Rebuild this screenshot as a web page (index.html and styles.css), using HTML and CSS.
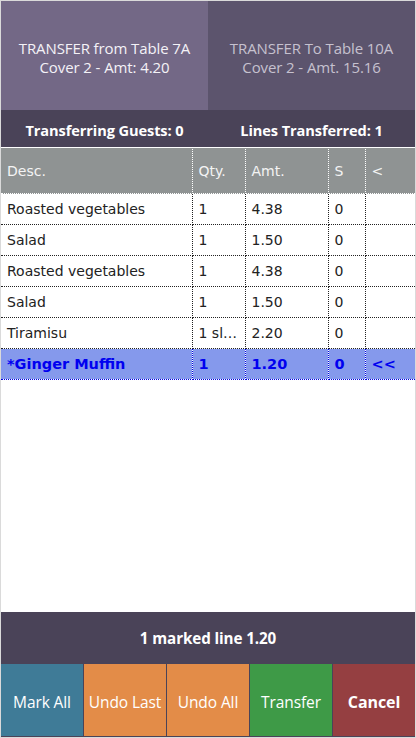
FILE: index.html
```html
<!DOCTYPE html>
<html>
<head>
<meta charset="utf-8">
<link rel="stylesheet" href="styles.css">
</head>
<body>
<div class="app">
  <div class="top">
    <div class="tile from">TRANSFER from Table 7A<br>Cover 2 - Amt: 4.20</div>
    <div class="tile to">TRANSFER To Table 10A<br>Cover 2 - Amt. 15.16</div>
  </div>
  <div class="status">
    <div>Transferring Guests: 0</div>
    <div>Lines Transferred: 1</div>
  </div>
  <div class="list">
    <table class="grid">
      <colgroup>
        <col class="c-desc"><col class="c-qty"><col class="c-amt"><col class="c-s"><col class="c-mark">
      </colgroup>
      <thead>
        <tr><th>Desc.</th><th>Qty.</th><th>Amt.</th><th>S</th><th>&lt;</th></tr>
      </thead>
      <tbody>
        <tr><td>Roasted vegetables</td><td>1</td><td>4.38</td><td>0</td><td></td></tr>
        <tr><td>Salad</td><td>1</td><td>1.50</td><td>0</td><td></td></tr>
        <tr><td>Roasted vegetables</td><td>1</td><td>4.38</td><td>0</td><td></td></tr>
        <tr><td>Salad</td><td>1</td><td>1.50</td><td>0</td><td></td></tr>
        <tr><td>Tiramisu</td><td>1 slice</td><td>2.20</td><td>0</td><td></td></tr>
        <tr class="marked"><td>*Ginger Muffin</td><td>1</td><td>1.20</td><td>0</td><td>&lt;&lt;</td></tr>
      </tbody>
    </table>
  </div>
  <div class="summary">1 marked line 1.20</div>
  <div class="actions">
    <button class="btn blue">Mark All</button>
    <button class="btn orange">Undo Last</button>
    <button class="btn orange">Undo All</button>
    <button class="btn green">Transfer</button>
    <button class="btn red bold">Cancel</button>
  </div>
</div>
</body>
</html>
```

FILE: styles.css
```css
html, body {
  margin: 0;
  padding: 0;
  background: #fff;
}
.app {
  width: 416px;
  height: 738px;
  box-sizing: border-box;
  border: 1px solid #dadada;
  display: flex;
  flex-direction: column;
  font-family: "Open Sans", "Noto Sans", sans-serif;
}
.top {
  display: grid;
  grid-template-columns: 1fr 1fr;
  height: 109px;
}
.tile {
  display: flex;
  align-items: center;
  justify-content: center;
  text-align: center;
  font-size: 15px;
  line-height: 19px;
  padding-top: 4px;
  letter-spacing: -0.1px;
}
.from {
  background: #736886;
  color: #f4f2f7;
}
.to {
  background: #5c546d;
  color: #c6c1cf;
}
.status {
  height: 37px;
  background: #4a4358;
  color: #fff;
  font-weight: 700;
  font-size: 14.6px;
  display: grid;
  grid-template-columns: 1fr 1fr;
  align-items: center;
  text-align: center;
  padding-top: 2px;
  box-sizing: border-box;
  letter-spacing: -0.1px;
}
.list {
  flex: 1;
  background: #fff;
}
.grid {
  width: 100%;
  border-collapse: collapse;
  table-layout: fixed;
  font-family: "DejaVu Sans", Verdana, sans-serif;
  font-size: 14px;
}
.c-desc { width: 191px; }
.c-qty { width: 53px; }
.c-amt { width: 83px; }
.c-s { width: 37px; }
.grid th {
  background: #8f9393;
  color: #f4f4f4;
  font-weight: 400;
  text-align: left;
  height: 45px;
  padding: 0 6px;
  border: 1px dotted #fff;
}
.grid td {
  height: 30px;
  padding: 0 6px;
  border: 1px dotted #222;
  color: #222;
  white-space: nowrap;
  overflow: hidden;
  text-overflow: ellipsis;
}
.grid tr.marked td {
  background: #8599ec;
  color: #0000f0;
  font-weight: 700;
  font-size: 14.5px;
  border-color: #0000e0;
}
.grid tr td:first-child,
.grid tr th:first-child {
  border-left: none;
}
.grid tr td:last-child,
.grid tr th:last-child {
  border-right: none;
}
.summary {
  height: 52px;
  background: #4a4358;
  color: #fff;
  font-weight: 700;
  font-size: 15.2px;
  display: flex;
  align-items: center;
  justify-content: center;
  letter-spacing: -0.1px;
}
.actions {
  display: grid;
  grid-template-columns: repeat(5, 1fr);
  column-gap: 1px;
  background: #4a4358;
  height: 73px;
  padding-bottom: 1px;
  box-sizing: border-box;
}
.btn {
  border: none;
  margin: 0;
  padding: 3px 0 0;
  font-family: "Open Sans", "Noto Sans", sans-serif;
  font-size: 15.5px;
  color: #fff;
  cursor: pointer;
  letter-spacing: -0.1px;
}
.btn.bold { font-weight: 700; font-size: 16px; }
.blue { background: #3f7b97; }
.orange { background: #e38c48; }
.green { background: #3e9a47; }
.red { background: #953f41; }
```
